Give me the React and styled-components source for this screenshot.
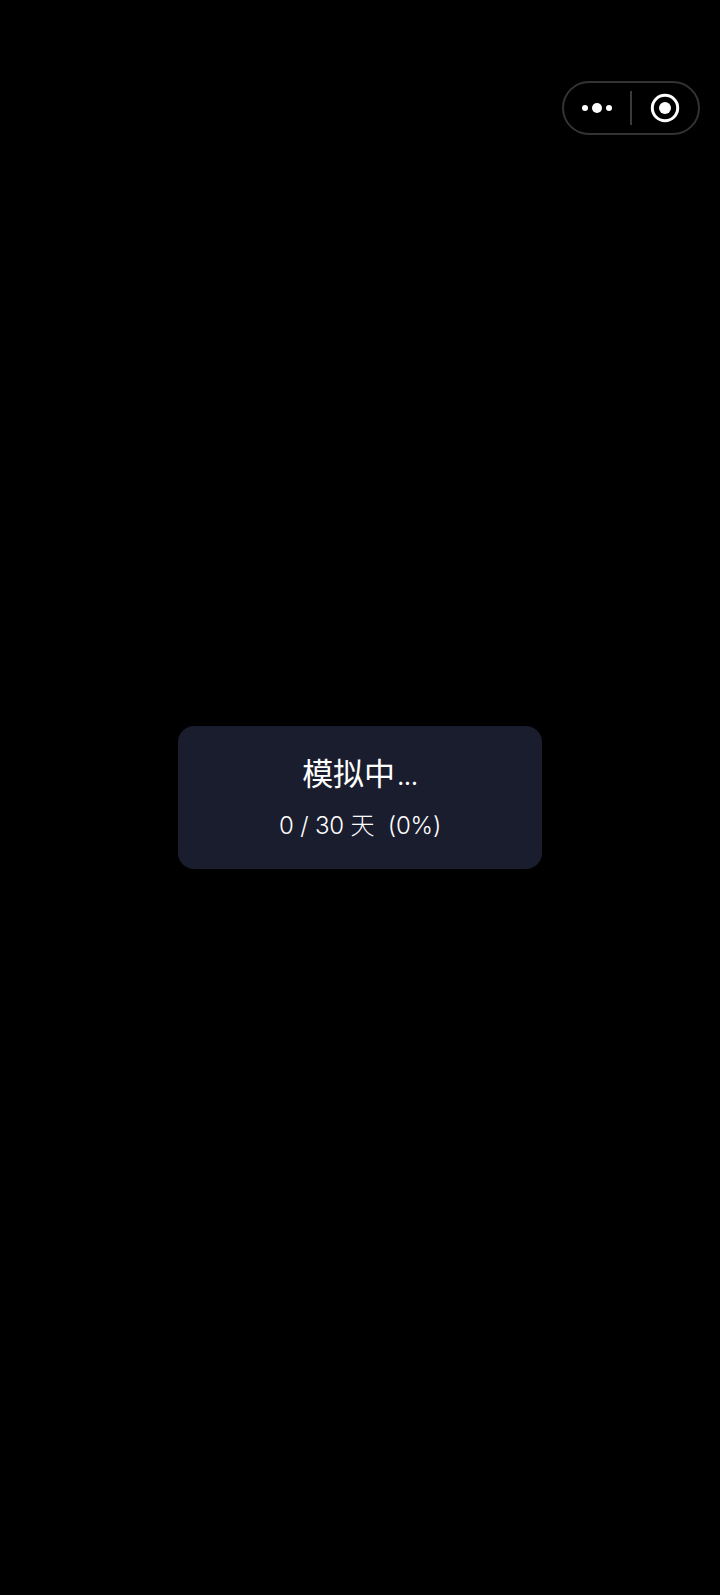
import styled, { createGlobalStyle } from 'styled-components';

const GlobalStyle = createGlobalStyle`
  html, body {
    margin: 0;
    padding: 0;
    background: #000;
  }
`;

const Page = styled.div`
  position: relative;
  width: 720px;
  height: 1595px;
  display: flex;
  align-items: center;
  justify-content: center;
  background: #000;
  font-family: Inter, "Noto Sans CJK SC", sans-serif;
  color: #fff;
`;

const Capsule = styled.div`
  position: absolute;
  top: 81px;
  right: 20px;
  width: 138px;
  height: 54px;
  box-sizing: border-box;
  display: flex;
  align-items: center;
  border: 2px solid #333;
  border-radius: 27px;
`;

const CapsuleSide = styled.div`
  flex: 1;
  display: flex;
  align-items: center;
  justify-content: center;
`;

const Divider = styled.div`
  width: 2px;
  height: 34px;
  background: #3a3a3a;
`;

const Card = styled.div`
  width: 364px;
  height: 143px;
  box-sizing: border-box;
  display: flex;
  flex-direction: column;
  align-items: center;
  padding-top: 28px;
  background: #1a1d2e;
  border-radius: 16px;
`;

const Title = styled.div`
  font-size: 31px;
  line-height: 40px;
  font-weight: 400;
`;

const Dots = styled.span`
  font-size: 24px;
  line-height: 1;
  margin-left: 2px;
`;

const Progress = styled.div`
  margin-top: 16px;
  font-size: 24px;
  line-height: 32px;
  font-weight: 300;
  letter-spacing: -0.15px;
  white-space: pre;
`;

const MoreIcon = () => (
  <svg width="30" height="12" viewBox="0 0 30 12">
    <circle cx="3" cy="6" r="3" fill="#fff" />
    <circle cx="15" cy="6" r="5" fill="#fff" />
    <circle cx="27" cy="6" r="3" fill="#fff" />
  </svg>
);

const CloseIcon = () => (
  <svg width="30" height="30" viewBox="0 0 30 30">
    <circle cx="15" cy="15" r="12.7" fill="none" stroke="#fff" strokeWidth="3" />
    <circle cx="15" cy="15" r="6" fill="#fff" />
  </svg>
);

const App = () => {
  return (
    <Page>
      <GlobalStyle />
      <Capsule>
        <CapsuleSide>
          <MoreIcon />
        </CapsuleSide>
        <Divider />
        <CapsuleSide>
          <CloseIcon />
        </CapsuleSide>
      </Capsule>
      <Card>
        <Title>
          模拟中<Dots>...</Dots>
        </Title>
        <Progress>0 / 30 天  (0%)</Progress>
      </Card>
    </Page>
  );
};

export default App;
